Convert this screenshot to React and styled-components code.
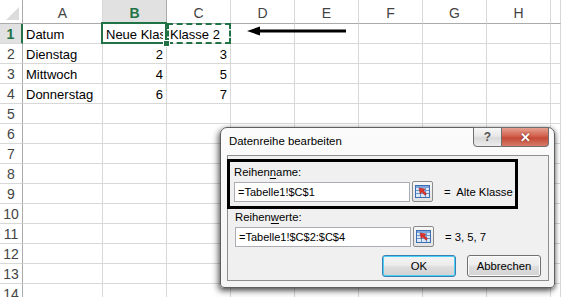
import React from "react";
import styled, { createGlobalStyle, css } from "styled-components";

const GREEN = "#217346";

const GlobalStyle = createGlobalStyle`
  html, body { margin: 0; padding: 0; background: #fff; overflow: hidden; }
  body { font-family: "Liberation Sans", Arial, sans-serif; }
`;

const Page = styled.div`
  position: relative;
  width: 561px;
  height: 297px;
  overflow: hidden;
`;

const Sheet = styled.div`
  display: grid;
  grid-template-columns: 23px 80px 64px 64px 64px 64px 64px 64px 64px 1fr;
  grid-template-rows: 24px;
  grid-auto-rows: 20px;
  font-size: 13px;
`;

const Corner = styled.div`
  position: relative;
  border-right: 1px solid #ababab;
  border-bottom: 1px solid #ababab;
  &::after {
    content: "";
    position: absolute;
    right: 3px;
    bottom: 3px;
    border-style: solid;
    border-width: 0 0 13px 13px;
    border-color: transparent transparent #dcdcdc transparent;
  }
`;

const ColHead = styled.div`
  display: flex;
  align-items: center;
  justify-content: center;
  padding-top: 3px;
  color: #444;
  font-size: 14px;
  background: #fff;
  border-right: 1px solid #d8d8d8;
  border-bottom: 1px solid #ababab;
  ${(p) =>
    p.$active &&
    css`
      background: #e1e1e1;
      color: ${GREEN};
      font-weight: bold;
      border-bottom: 2px solid ${GREEN};
      border-right-color: #ababab;
    `}
`;

const RowHead = styled.div`
  display: flex;
  align-items: center;
  justify-content: center;
  color: #444;
  font-size: 14px;
  background: #fff;
  border-right: 1px solid #ababab;
  border-bottom: 1px solid #d8d8d8;
  ${(p) =>
    p.$active &&
    css`
      background: #e1e1e1;
      color: ${GREEN};
      font-weight: bold;
      border-right: 2px solid ${GREEN};
    `}
`;

const Cell = styled.div`
  position: relative;
  display: flex;
  align-items: center;
  justify-content: ${(p) => (p.$num ? "flex-end" : "flex-start")};
  padding: 2px 3px 0 3px;
  color: #000;
  white-space: nowrap;
  overflow: ${(p) => (p.$mark ? "visible" : "hidden")};
  border-right: 1px solid #d8d8d8;
  border-bottom: 1px solid #d8d8d8;
  ${(p) =>
    p.$mark === "solid" &&
    css`
      z-index: 2;
      &::after {
        content: "";
        position: absolute;
        inset: -2px -1px -1px -2px;
        border: 2px solid ${GREEN};
        pointer-events: none;
      }
      &::before {
        content: "";
        position: absolute;
        right: -4px;
        bottom: -4px;
        width: 5px;
        height: 5px;
        background: ${GREEN};
        border: 1px solid #fff;
        z-index: 3;
      }
    `}
  ${(p) =>
    p.$mark === "dashed" &&
    css`
      z-index: 1;
      &::after {
        content: "";
        position: absolute;
        inset: -1px -1px -1px 0;
        border: 2px dashed ${GREEN};
        pointer-events: none;
      }
    `}
`;

const Clip = styled.span`
  overflow: hidden;
  display: block;
  width: 100%;
`;

const Arrow = styled.svg`
  position: absolute;
  left: 246px;
  top: 25px;
`;

/* dialog */

const Dialog = styled.div`
  position: absolute;
  left: 220px;
  top: 127px;
  width: 335px;
  height: 161px;
  box-sizing: border-box;
  display: flex;
  flex-direction: column;
  background: linear-gradient(180deg, #fbfbfb 0%, #f4f4f4 100%);
  border: 1px solid #5f5f5f;
  border-radius: 7px 7px 4px 4px;
  box-shadow: -2px 3px 6px rgba(0, 0, 0, 0.55), 1px 1px 4px rgba(0, 0, 0, 0.35);
  font-family: "Liberation Sans", Arial, sans-serif;
  font-size: 11.3px;
  color: #000;
`;

const TitleBar = styled.div`
  display: flex;
  align-items: flex-start;
  height: 27px;
  padding-left: 8px;
`;

const Title = styled.div`
  flex: 1;
  padding-top: 7px;
  font-size: 11.4px;
`;

const CapButton = styled.div`
  display: flex;
  align-items: center;
  justify-content: center;
  height: 20px;
  box-sizing: border-box;
  margin-top: -1px;
  border: 1px solid #6f6f6f;
  ${(p) =>
    p.$close
      ? css`
          width: 47px;
          margin-right: 5px;
          border-left: none;
          border-radius: 0 0 4px 0;
          background: linear-gradient(180deg, #e6a090 0%, #d2604d 45%, #c44a36 55%, #d77b68 100%);
          color: #fff;
          font-weight: bold;
          font-size: 13px;
          text-shadow: 0 0 2px #6a1a10;
        `
      : css`
          width: 29px;
          border-radius: 0 0 0 4px;
          background: linear-gradient(180deg, #f7f7f7 0%, #e8e8e8 45%, #d9d9d9 55%, #ececec 100%);
          color: #555;
          font-weight: bold;
          font-size: 12px;
        `}
`;

const Client = styled.div`
  flex: 1;
  margin: 0 5px 6px 6px;
  background: #f0f0f0;
  border: 1px solid #8e8e8e;
  padding: 3px 0 0 0;
  display: flex;
  flex-direction: column;
`;

const Section = styled.div`
  display: flex;
  flex-direction: column;
  width: 291px;
  box-sizing: border-box;
  padding: 0 0 ${(p) => (p.$boxed ? "4px" : "0")} ${(p) => (p.$boxed ? "4px" : "7px")};
  margin-left: ${(p) => (p.$boxed ? "-1px" : "0")};
  border: ${(p) => (p.$boxed ? "3px solid #000" : "none")};
`;

const Label = styled.div`
  height: 15px;
  line-height: 15px;
  margin-top: ${(p) => (p.$boxed ? "3px" : "1px")};
  margin-bottom: 1px;
  u { text-decoration: underline; text-underline-offset: 2px; }
`;

const FieldRow = styled.div`
  display: flex;
  align-items: center;
  white-space: nowrap;
`;

const Input = styled.div`
  width: 176px;
  height: 20px;
  box-sizing: border-box;
  border: 1px solid #abadb3;
  background: #fff;
  padding: 0 3px;
  display: flex;
  align-items: center;
  font-size: 11px;
`;

const RefButton = styled.div`
  width: 21px;
  height: 21px;
  box-sizing: border-box;
  margin-left: 2px;
  border: 1px solid #8a8a8a;
  border-radius: 2px;
  background: linear-gradient(180deg, #f7f7f7 0%, #e3e3e3 100%);
  display: flex;
  align-items: center;
  justify-content: center;
`;

const Result = styled.div`
  margin-left: 11px;
  white-space: pre;
`;

const Buttons = styled.div`
  display: flex;
  justify-content: flex-end;
  gap: 11px;
  margin-top: 8px;
  padding-right: 7px;
`;

const Button = styled.div`
  width: 74px;
  height: 22px;
  box-sizing: border-box;
  display: flex;
  align-items: center;
  justify-content: center;
  border-radius: 3px;
  background: linear-gradient(180deg, #f4f4f4 0%, #ececec 45%, #dddddd 55%, #d2d2d2 100%);
  border: 1px solid ${(p) => (p.$default ? "#3c7fb1" : "#707070")};
  box-shadow: ${(p) => (p.$default ? "inset 0 0 0 1px #48d0f8" : "inset 0 0 0 1px #fcfcfc")};
`;

const RefIcon = () => (
  <svg width="15" height="13" viewBox="0 0 15 13">
    <rect x="0.5" y="0.5" width="14" height="12" fill="#dbe8f8" stroke="#3b6db3" />
    <rect x="1" y="1" width="13" height="2" fill="#7ea6dc" />
    <line x1="1" y1="5.5" x2="14" y2="5.5" stroke="#6f97cf" />
    <line x1="1" y1="8.5" x2="14" y2="8.5" stroke="#6f97cf" />
    <line x1="5.5" y1="3" x2="5.5" y2="12" stroke="#6f97cf" />
    <line x1="10.5" y1="3" x2="10.5" y2="12" stroke="#6f97cf" />
    <polygon points="4,3 10,4 8.3,5.6 11.5,8.8 10,10.3 6.8,7.1 5.2,8.8" fill="#e0322a" stroke="#9c1a12" strokeWidth="0.5" />
  </svg>
);

const cols = ["A", "B", "C", "D", "E", "F", "G", "H", ""];

const data = {
  1: ["Datum", "Neue Klasse", "Klasse 2"],
  2: ["Dienstag", 2, 3],
  3: ["Mittwoch", 4, 5],
  4: ["Donnerstag", 6, 7],
};

function Row({ n }) {
  const vals = data[n] || [];
  return (
    <>
      <RowHead $active={n === 1}>{n}</RowHead>
      {cols.map((c, i) => {
        const v = vals[i];
        const mark = n === 1 && i === 1 ? "solid" : n === 1 && i === 2 ? "dashed" : undefined;
        return (
          <Cell key={c + i} $num={typeof v === "number"} $mark={mark}>
            {mark ? <Clip>{v}</Clip> : v}
          </Cell>
        );
      })}
    </>
  );
}

export default function App() {
  const rows = Array.from({ length: 14 }, (_, i) => i + 1);
  return (
    <Page>
      <GlobalStyle />
      <Sheet>
        <Corner />
        {cols.map((c, i) => (
          <ColHead key={c + i} $active={c === "B"}>
            {c}
          </ColHead>
        ))}
        {rows.map((n) => (
          <Row key={n} n={n} />
        ))}
      </Sheet>

      <Arrow width="102" height="12" viewBox="0 0 102 12">
        <line x1="10" y1="6" x2="100" y2="6" stroke="#000" strokeWidth="3" />
        <polygon points="1,6 14,1.5 14,10.5" fill="#000" />
      </Arrow>

      <Dialog>
        <TitleBar>
          <Title>Datenreihe bearbeiten</Title>
          <CapButton>?</CapButton>
          <CapButton $close>✕</CapButton>
        </TitleBar>
        <Client>
          <Section $boxed>
            <Label $boxed>
              Reihen<u>n</u>ame:
            </Label>
            <FieldRow>
              <Input>=Tabelle1!$C$1</Input>
              <RefButton>
                <RefIcon />
              </RefButton>
              <Result>{"=  Alte Klasse"}</Result>
            </FieldRow>
          </Section>
          <Section>
            <Label>
              Reihen<u>w</u>erte:
            </Label>
            <FieldRow>
              <Input>=Tabelle1!$C$2:$C$4</Input>
              <RefButton>
                <RefIcon />
              </RefButton>
              <Result>= 3, 5, 7</Result>
            </FieldRow>
          </Section>
          <Buttons>
            <Button $default>OK</Button>
            <Button>Abbrechen</Button>
          </Buttons>
        </Client>
      </Dialog>
    </Page>
  );
}
